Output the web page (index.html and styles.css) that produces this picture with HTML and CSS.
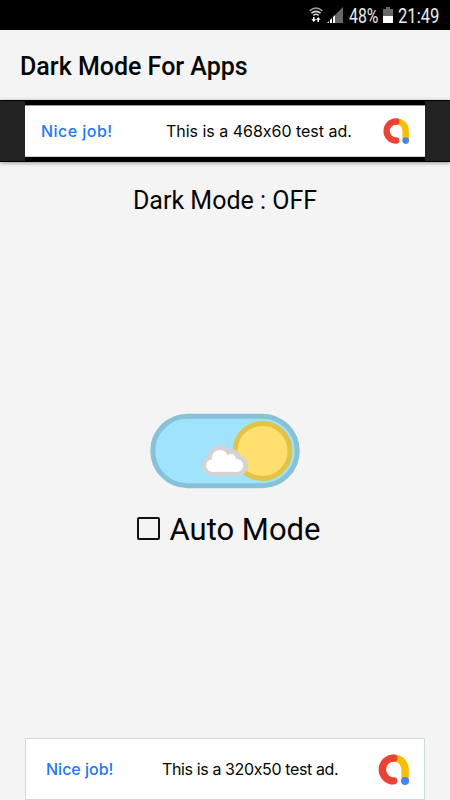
FILE: index.html
```html
<!DOCTYPE html>
<html lang="en">
<head>
<meta charset="utf-8">
<meta name="viewport" content="width=device-width">
<title>Dark Mode For Apps</title>
<link rel="stylesheet" href="styles.css">
</head>
<body>
<div class="status">
  <svg class="wifi" width="14" height="16" viewBox="0 0 14 16" fill="none" stroke="#ddd" stroke-width="1.6">
    <path d="M.6 3.8Q7-1.4 13.4 3.8" stroke="#999"/>
    <path d="M2.4 6.2Q7 2.5 11.6 6.2M4.4 8.3Q7 6.3 9.6 8.3"/>
    <path d="M4.8 10v4M9.2 15v-4" stroke="#fff"/>
    <path d="M2.4 12.2h4.8L4.8 15zM6.8 12.8h4.8L9.2 10z" fill="#fff" stroke="none"/>
  </svg>
  <svg class="signal" width="16" height="16" viewBox="0 0 16 16">
    <path d="M8 8L16 0V16H8z" fill="#686868"/>
    <path d="M0 16l2-2v2zM3 16v-3l2-2v5zM6 16V10l2-2v8z" fill="#fff"/>
  </svg>
  <span class="percent">48%</span>
  <svg class="battery" width="10" height="16" viewBox="0 0 10 16">
    <path d="M3 0h4v2h3v7H0V2h3z" fill="#686868"/>
    <path d="M0 9h10v7H0z" fill="#fff"/>
  </svg>
  <span class="clock">21:49</span>
</div>
<header class="appbar"><h1>Dark Mode For Apps</h1></header>
<section class="topad">
  <div class="frame">
    <div class="banner">
      <span class="nice">Nice job!</span>
      <span class="copy">This is a 468x60 test ad.</span>
      <svg class="logo" width="26" height="26" viewBox="0 0 30 30" fill="none" stroke-width="7.4" stroke-linecap="round">
        <path d="M15.2 4C22 4 26.2 9 26.2 15v11" stroke="#fbbc04"/>
        <path d="M15.2 4a11 11 0 0 0 0 22" stroke="#ea4335"/>
        <circle cx="26.2" cy="26.1" r="3.8" fill="#4285f4"/>
      </svg>
    </div>
  </div>
</section>
<main>
  <p class="state">Dark Mode : OFF</p>
  <svg class="toggle" width="150" height="76" viewBox="0 0 150 76">
    <rect x="2.8" y="3.2" width="144.4" height="69.5" rx="34.75" fill="#a0e3fc" stroke="#87c2d7" stroke-width="5"/>
    <circle cx="112.5" cy="38" r="27.5" fill="#ffdf6d" stroke="#e1c447" stroke-width="5"/>
    <g fill="#d3d3d3">
      <circle cx="70" cy="44.7" r="12.5"/><circle cx="81" cy="45" r="9.5"/>
      <circle cx="62.5" cy="52.7" r="10.5"/><circle cx="87.5" cy="52.7" r="10.5"/>
      <rect x="58" y="45" width="34" height="18.5" rx="6"/>
    </g>
    <g fill="#fff">
      <circle cx="70" cy="45" r="8"/><circle cx="81" cy="46" r="5"/>
      <circle cx="62.5" cy="52.5" r="6.3"/><circle cx="87" cy="52.5" r="6.3"/>
      <rect x="62" y="46" width="26" height="12.8"/>
    </g>
  </svg>
  <div class="auto"><span class="box"></span><span>Auto Mode</span></div>
</main>
<footer class="banner bottomad">
  <span class="nice">Nice job!</span>
  <span class="copy">This is a 320x50 test ad.</span>
  <svg class="logo" width="31" height="31" viewBox="0 0 30 30" fill="none" stroke-width="7.2" stroke-linecap="round">
    <path d="M15.2 4C22 4 26.2 9 26.2 15v11" stroke="#fbbc04"/>
    <path d="M15.2 4a11 11 0 0 0 0 22" stroke="#ea4335"/>
    <circle cx="26.2" cy="26.1" r="3.8" fill="#4285f4"/>
  </svg>
</footer>
</body>
</html>
```
FILE: styles.css
```css
* { box-sizing: border-box; }
body { margin: 0; height: 800px; overflow: hidden; background: #f4f4f4; color: #050505; font-family: Roboto, "Liberation Sans", sans-serif; display: flex; flex-direction: column; }
.status { height: 30px; flex: none; background: #000; color: #eee; display: flex; align-items: center; padding-left: 309px; font-size: 20px; line-height: 30px; white-space: nowrap; }
.wifi { flex: none; }
.signal { flex: none; margin-left: 4px; }
.percent { width: 34px; margin-left: 6px; transform: scaleX(.79); transform-origin: left; padding-top: 1px; }
.battery { flex: none; }
.clock { margin-left: 5px; padding-top: 1px; transform: scaleX(.83); transform-origin: left; }
.appbar { height: 70px; flex: none; display: flex; align-items: center; padding: 2px 0 0 20px; }
h1 { margin: 0; font-size: 25px; font-weight: 500; white-space: nowrap; }
.topad { height: 62px; flex: none; background: #222; border-top: 1px solid #000; border-bottom: 1px solid #000; padding: 0 25px; box-shadow: 0 1px 4px #0006; }
.frame { height: 60px; background: #000; padding: 4px 0 4px; }
.banner { display: flex; align-items: center; background: #fff; font-family: Inter, sans-serif; font-size: 16px; font-feature-settings: "calt" 0; white-space: nowrap; }
.frame .banner { height: 52px; border-top: 1px solid #9299a0; border-bottom: 1px solid #cdd6d2; padding-left: 16px; }
.nice { color: #2079f5; font-weight: 500; width: 125px; }
.frame .nice { letter-spacing: .45px; }
.copy { width: 217px; }
.frame .copy { letter-spacing: -.02px; }
.logo { flex: none; }
main { flex: 1; display: flex; flex-direction: column; align-items: center; }
.state { margin: 23px 0 0; font-size: 25px; line-height: 32px; }
.toggle { margin-top: 196px; flex: none; }
.auto { display: flex; align-items: center; gap: 9px; margin-top: 21px; font-size: 31px; line-height: 40px; padding-left: 8px; }
.box { width: 23px; height: 23px; border: 2px solid #111; border-radius: 2px; margin-top: -3px; }
.bottomad { height: 62px; flex: none; margin: 0 25px; border: 1px solid #cfd8dc; padding-left: 20px; }
.bottomad .nice { width: 116px; }
.bottomad .copy { width: 216px; letter-spacing: -.38px; }
```
